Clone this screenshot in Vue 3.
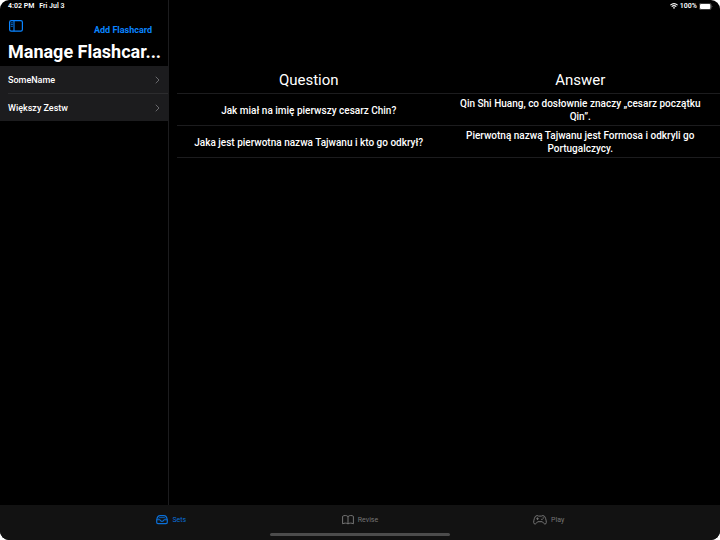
<script setup>
import { ref } from 'vue'

const sets = ['SomeName', 'Większy Zestw']
const cards = [
  {
    question: 'Jak miał na imię pierwszy cesarz Chin?',
    answer: 'Qin Shi Huang, co dosłownie znaczy „cesarz początku Qin”.',
  },
  {
    question: 'Jaka jest pierwotna nazwa Tajwanu i kto go odkrył?',
    answer: 'Pierwotną nazwą Tajwanu jest Formosa i odkryli go Portugalczycy.',
  },
]
const tabs = ['Sets', 'Revise', 'Play']
const active = ref('Sets')
</script>

<template>
  <div class="screen">
    <div class="split">
      <aside class="sidebar">
        <div class="status">
          <span>4:02 PM</span>
          <span>Fri Jul 3</span>
        </div>
        <div class="toolbar">
          <button class="toggle" type="button" aria-label="Toggle sidebar">
            <svg width="14" height="12" viewBox="0 0 14 12" fill="none" stroke="currentColor">
              <rect x="0.6" y="0.6" width="12.8" height="10.6" rx="1.6" stroke-width="1.2" />
              <path d="M5 0.6V11.2" stroke-width="1.1" />
              <path d="M1.8 2.9H3.9M1.8 4.6H3.9M1.8 6.3H3.9" stroke-width="0.8" />
            </svg>
          </button>
          <button class="add" type="button">Add Flashcard</button>
        </div>
        <h1>Manage Flashcar...</h1>
        <ul class="sets">
          <li v-for="name in sets" :key="name">
            <a href="#">
              <span>{{ name }}</span>
              <svg width="5" height="8" viewBox="0 0 5 8" fill="none" stroke="#69696d">
                <path d="M1 1L4 4L1 7" stroke-linecap="round" stroke-linejoin="round" />
              </svg>
            </a>
          </li>
        </ul>
      </aside>

      <main class="detail">
        <div class="status status-right">
          <svg width="8" height="6" viewBox="0 0 8 6" fill="none" stroke="#fff">
            <path d="M0.4 2.1Q4 -0.9 7.6 2.1" stroke-width="1.1" />
            <path d="M1.7 3.6Q4 1.7 6.3 3.6" stroke-width="1.1" />
            <path d="M2.8 4.6Q4 3.7 5.2 4.6L4 6Z" fill="#fff" stroke="none" />
          </svg>
          <span>100%</span>
          <svg width="14" height="7" viewBox="0 0 14 7">
            <rect x="0.3" y="0.3" width="11.8" height="6.4" rx="1.7" fill="none" stroke="#777" stroke-width="0.6" />
            <rect x="1" y="1" width="10.4" height="5" rx="1" fill="#fff" />
            <path d="M12.8 2.4Q14 3.5 12.8 4.6Z" fill="#888" />
          </svg>
        </div>
        <table>
          <thead>
            <tr>
              <th scope="col">Question</th>
              <th scope="col">Answer</th>
            </tr>
          </thead>
          <tbody>
            <tr v-for="card in cards" :key="card.question">
              <td>{{ card.question }}</td>
              <td>{{ card.answer }}</td>
            </tr>
          </tbody>
        </table>
      </main>
    </div>

    <footer class="bottom">
      <nav class="tabs">
        <button
          v-for="tab in tabs"
          :key="tab"
          type="button"
          :class="{ active: active === tab }"
          @click="active = tab"
        >
          <svg v-if="tab === 'Sets'" width="12" height="10" viewBox="0 0 12 10" fill="none" stroke="currentColor" stroke-linejoin="round">
            <path d="M0.7 4.8Q1.1 2.4 2 1.5Q2.8 0.7 4 0.7H8Q9.2 0.7 10 1.5Q10.9 2.4 11.3 4.8V7.3Q11.3 8.6 10 8.6H2Q0.7 8.6 0.7 7.3Z" stroke-width="1.2" />
            <path d="M0.8 4.8H4Q4.2 6.4 6 6.4T8 4.8H11.2" stroke-width="1.1" />
            <path d="M2.5 3.4Q3 2.6 4 2.6H8Q9 2.6 9.5 3.4" stroke-width="0.8" />
          </svg>
          <svg v-else-if="tab === 'Revise'" width="12" height="10" viewBox="0 0 12 10" fill="none" stroke="currentColor" stroke-linejoin="round">
            <path d="M6 1.6Q4.8 0.5 3.3 0.5Q1.8 0.5 0.6 1.3V8.8Q2 8.1 3.3 8.1Q5 8.1 6 8.9Q7 8.1 8.7 8.1Q10 8.1 11.4 8.8V1.3Q10.2 0.5 8.7 0.5Q7.2 0.5 6 1.6V8.9" />
          </svg>
          <svg v-else width="14" height="10" viewBox="0 0 14 10" fill="none" stroke="currentColor" stroke-linejoin="round">
            <path d="M4 0.6Q5 0.6 5.6 1.1H8.4Q9 0.6 10 0.6Q11.8 0.6 12.6 3.4Q13.4 6 13.3 7.6Q13.2 9 12 9Q11.2 9 10.4 8L9.3 6.7H4.7L3.6 8Q2.8 9 2 9Q0.8 9 0.7 7.6Q0.6 6 1.4 3.4Q2.2 0.6 4 0.6Z" />
            <path d="M3.2 3.7H5.8M4.5 2.4V5" stroke-width="0.9" />
            <circle cx="10.2" cy="3" r="0.7" fill="currentColor" stroke="none" />
            <circle cx="8.9" cy="4.4" r="0.7" fill="currentColor" stroke="none" />
          </svg>
          <span>{{ tab }}</span>
        </button>
      </nav>
      <div class="home"></div>
    </footer>
  </div>
</template>

<style>
body {
  margin: 0;
  background: #fff;
}
</style>

<style scoped>
.screen {
  display: flex;
  flex-direction: column;
  min-height: 100vh;
  overflow: hidden;
  border-radius: 9px;
  background: #000;
  color: #fff;
  font-family: Roboto, Inter, "Liberation Sans", sans-serif;
}
button {
  padding: 0;
  border: 0;
  background: none;
  color: inherit;
  font: inherit;
  cursor: pointer;
}
svg {
  display: block;
  flex: none;
}
.split {
  flex: 1;
  display: grid;
  grid-template-columns: minmax(169px, 23%) 1fr;
}
.sidebar {
  border-right: 1px solid #1c1c1e;
}
.status {
  display: flex;
  align-items: center;
  gap: 5px;
  height: 12px;
  padding: 0 8px;
  font-size: 7px;
  font-weight: 600;
}
.status-right {
  justify-content: flex-end;
  gap: 2px;
  padding-right: 7px;
}
.toolbar {
  display: flex;
  align-items: flex-start;
  justify-content: space-between;
  height: 28px;
  padding: 8px 16px 0 9px;
  box-sizing: border-box;
}
.toggle,
.add {
  color: #0a84ff;
}
.add {
  padding-top: 4px;
  font-size: 9px;
  line-height: 12px;
  font-weight: 700;
}
h1 {
  margin: 0;
  padding: 0 0 2px 8px;
  font-size: 18px;
  line-height: 24px;
  font-weight: 700;
  white-space: nowrap;
}
.sets {
  margin: 0;
  padding: 0;
  list-style: none;
  background: #1c1c1e;
}
.sets li {
  padding-left: 8px;
}
.sets a {
  display: flex;
  align-items: center;
  justify-content: space-between;
  height: 27px;
  padding-right: 8px;
  color: #fff;
  font-size: 9px;
  font-weight: 500;
  text-decoration: none;
}
.sets li + li a {
  border-top: 1px solid #2c2c2e;
}
.detail {
  overflow: hidden;
}
table {
  width: calc(100% - 8px);
  margin: 54px 4px 0;
  border-collapse: collapse;
  table-layout: fixed;
  text-align: center;
}
th,
td {
  position: relative;
  box-sizing: border-box;
  height: 32px;
  padding: 0 8px;
  font-size: 10px;
  line-height: 13px;
  font-weight: 500;
}
th {
  height: 28px;
  font-size: 15px;
  line-height: 18px;
  font-weight: 400;
}
th::after,
td::after {
  content: "";
  position: absolute;
  right: -4px;
  bottom: 0;
  left: 0;
  height: 1px;
  background: #1c1c1e;
}
th:first-child::after,
td:first-child::after {
  right: 0;
  left: 4px;
}
.bottom {
  display: flex;
  flex-direction: column;
  align-items: center;
  background: #121212;
}
.tabs {
  display: grid;
  grid-template-columns: repeat(3, 1fr);
  box-sizing: border-box;
  width: 100%;
  height: 28px;
  padding: 1px 77px 0;
}
.tabs button {
  display: flex;
  align-items: center;
  justify-content: center;
  gap: 4px;
  color: #757575;
  font-size: 7px;
}
.tabs .active {
  color: #0a6fd8;
}
.home {
  width: 25%;
  height: 3px;
  margin-bottom: 4px;
  border-radius: 2px;
  background: #4c4c4c;
}
</style>
